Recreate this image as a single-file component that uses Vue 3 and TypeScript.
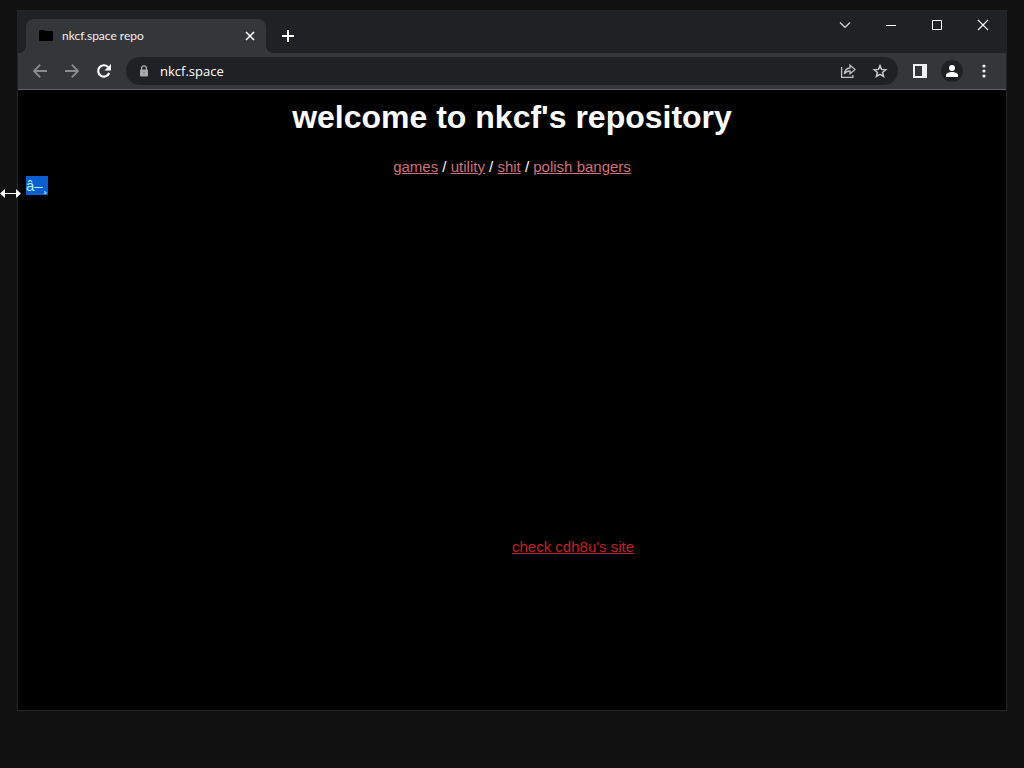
<script setup lang="ts">
import { ref } from 'vue'

interface PageLink {
  label: string
  href: string
}

const address = ref('nkcf.space')
const links: PageLink[] = [
  { label: 'games', href: '#games' },
  { label: 'utility', href: '#utility' },
  { label: 'shit', href: '#shit' },
  { label: 'polish bangers', href: '#bangers' },
]
</script>

<template>
  <div class="desktop">
    <div class="window">
      <header class="tabstrip">
        <div class="tab">
          <svg class="folder" width="14" height="12" viewBox="0 0 14 12" aria-hidden="true">
            <path d="M1 0h4l1.500 1H13a1 1 0 0 1 1 1v8a1 1 0 0 1-1 1H1a1 1 0 0 1-1-1V1a1 1 0 0 1 1-1z" fill="#000" />
          </svg>
          <span class="tab-title">nkcf.space repo</span>
          <button class="tab-close" type="button" aria-label="Close tab">
            <svg width="16" height="16" viewBox="0 0 16 16"><path d="M4 4l8 8M12 4l-8 8" stroke="#fff" stroke-width="1.700" /></svg>
          </button>
        </div>
        <button class="new-tab" type="button" aria-label="New tab">
          <svg width="16" height="16" viewBox="0 0 16 16"><path d="M8 2v12M2 8h12" stroke="#fff" stroke-width="2" /></svg>
        </button>
        <div class="controls">
          <button type="button" aria-label="Search tabs">
            <svg width="12" height="12" viewBox="0 0 12 12"><path d="M1 3.500l5 5 5-5" fill="none" stroke="#ddd" stroke-width="1.200" /></svg>
          </button>
          <button type="button" aria-label="Minimize">
            <svg width="12" height="12" viewBox="0 0 12 12"><path d="M1 6.500h10" stroke="#fff" /></svg>
          </button>
          <button type="button" aria-label="Maximize">
            <svg width="12" height="12" viewBox="0 0 12 12"><path d="M1.500 1.500h9v9h-9z" fill="none" stroke="#fff" /></svg>
          </button>
          <button type="button" aria-label="Close">
            <svg width="12" height="12" viewBox="0 0 12 12"><path d="M1 1l10 10M11 1L1 11" stroke="#fff" stroke-width="1.200" /></svg>
          </button>
        </div>
      </header>

      <nav class="toolbar">
        <button class="tool" type="button" aria-label="Back">
          <svg width="16" height="16" viewBox="0 0 16 16"><path d="M15 8H2M8.200 1.700L2 8l6.200 6.300" fill="none" stroke="#8a8b8e" stroke-width="1.800" /></svg>
        </button>
        <button class="tool" type="button" aria-label="Forward">
          <svg width="16" height="16" viewBox="0 0 16 16"><path d="M1 8h13M7.800 1.700L14 8l-6.200 6.300" fill="none" stroke="#8a8b8e" stroke-width="1.800" /></svg>
        </button>
        <button class="tool" type="button" aria-label="Reload">
          <svg width="16" height="16" viewBox="0 0 16 16">
            <path d="M13.200 10A5.700 5.700 0 1 1 12 4" fill="none" stroke="#fff" stroke-width="2.200" />
            <path d="M15 1v6.500H8.500z" fill="#fff" />
          </svg>
        </button>
        <div class="omnibox">
          <span class="slot">
            <svg width="10" height="12" viewBox="0 0 10 12" aria-hidden="true">
              <path d="M2.600 5V3.200a2.400 2.400 0 0 1 4.800 0V5" fill="none" stroke="#aaabad" stroke-width="1.300" />
              <rect x="1" y="4.500" width="8" height="7" rx="1" fill="#aaabad" />
              <circle cx="5" cy="8" r="1" fill="#8a8b8e" />
            </svg>
          </span>
          <input v-model="address" class="address" type="text" aria-label="Address" spellcheck="false" />
          <button class="tool" type="button" aria-label="Share">
            <svg width="16" height="16" viewBox="0 0 16 16" fill="none" stroke="#bfc0c2" stroke-width="1.300">
              <path d="M1.600 4v10.400h11.300V12" />
              <path d="M4.300 11c.4-4 2.300-5.800 5.700-6V2.200L15 6.500l-5 4.300V8C7.600 8 5.700 8.800 4.300 11z" />
            </svg>
          </button>
          <button class="tool" type="button" aria-label="Bookmark">
            <svg width="16" height="16" viewBox="0 0 16 16">
              <path d="M8 2.600l1.600 3.800 4.100.3-3.100 2.700 1 4L8 11.300l-3.600 2.100 1-4-3.100-2.700 4.100-.3z" fill="none" stroke="#c8c9cb" stroke-width="1.500" />
            </svg>
          </button>
        </div>
        <button class="tool" type="button" aria-label="Side panel">
          <svg width="14" height="14" viewBox="0 0 14 14"><path d="M0 0h14v14H0zM2 2v10h7V2z" fill="#f1f2f5" fill-rule="evenodd" /></svg>
        </button>
        <button class="tool" type="button" aria-label="Profile">
          <svg width="22" height="22" viewBox="0 0 22 22">
            <circle cx="11" cy="11" r="11" fill="#202124" />
            <circle cx="11" cy="8" r="3" fill="#fff" />
            <path d="M5 17v-2c0-2 3.500-3 6-3s6 1 6 3v2z" fill="#fff" />
          </svg>
        </button>
        <button class="tool" type="button" aria-label="Menu">
          <svg width="16" height="16" viewBox="0 0 16 16" fill="#eee"><circle cx="8" cy="3" r="1.600" /><circle cx="8" cy="8" r="1.600" /><circle cx="8" cy="13" r="1.600" /></svg>
        </button>
      </nav>

      <main class="page">
        <h1>welcome to nkcf's repository</h1>
        <p class="links">
          <template v-for="(link, i) in links" :key="link.href">
            <template v-if="i > 0"> / </template><a :href="link.href">{{ link.label }}</a>
          </template>
        </p>
        <p class="marker"><mark>â–¸</mark></p>
        <a class="friend" href="#friend">check cdh8u's site</a>
      </main>
    </div>

    <svg class="cursor" width="21" height="9" viewBox="0 0 21 9" aria-hidden="true">
      <path d="M0 4.500L5 0v4h11V0l5 4.500L16 9V5H5v4z" fill="#fff" />
    </svg>
  </div>
</template>

<style>
body {
  margin: 0;
  background: #111;
}
</style>

<style scoped>
.desktop {
  position: relative;
  display: flex;
  box-sizing: border-box;
  min-height: 100vh;
  padding: 10px 17px 57px;
  background: #111;
}

.window {
  flex: 1;
  display: flex;
  flex-direction: column;
  border: 1px solid #242424;
  background: #000;
  font-family: "Liberation Sans", Arial, sans-serif;
}

button {
  display: flex;
  align-items: center;
  justify-content: center;
  padding: 0;
  border: 0;
  background: none;
}

.tabstrip {
  display: flex;
  height: 42px;
  padding-left: 8px;
  background: #202124;
}

.tab {
  position: relative;
  display: flex;
  align-items: center;
  box-sizing: border-box;
  width: 240px;
  margin-top: 8px;
  padding: 0 8px 0 13px;
  border-radius: 8px 8px 0 0;
  background: #35363a;
}

.tab::before,
.tab::after {
  content: "";
  position: absolute;
  bottom: 0;
  width: 8px;
  height: 8px;
}

.tab::before {
  right: 100%;
  background: radial-gradient(circle at 0 0, transparent 8px, #35363a 8px);
}

.tab::after {
  left: 100%;
  background: radial-gradient(circle at 100% 0, transparent 8px, #35363a 8px);
}

.tab-title {
  flex: 1;
  margin-left: 9px;
  color: #f1f1f2;
  font: 12px/16px Lato, "Noto Sans", sans-serif;
  white-space: nowrap;
}

.new-tab {
  width: 28px;
  margin: 8px 0 0 8px;
}

.controls {
  display: flex;
  height: 28px;
  margin-left: auto;
}

.controls button {
  width: 46px;
}

.toolbar {
  display: flex;
  align-items: center;
  height: 36px;
  padding: 0 6px;
  border-bottom: 1px solid #66676a;
  background: #35363a;
}

.tool {
  flex: none;
  width: 32px;
  height: 28px;
}

.omnibox {
  flex: 1;
  display: flex;
  align-items: center;
  min-width: 0;
  height: 28px;
  margin: 0 6px;
  padding: 0 2px;
  border-radius: 14px;
  background: #202124;
}

.slot {
  display: flex;
  justify-content: center;
  width: 32px;
}

.address {
  flex: 1;
  min-width: 0;
  padding: 0;
  border: 0;
  outline: 0;
  background: none;
  color: #fff;
  font: 13px/20px "Open Sans", "Noto Sans", sans-serif;
}

.page {
  flex: 1;
  padding: 8px;
  color: #fff;
  font-size: 15px;
  line-height: 19px;
}

h1 {
  margin: 0;
  font-size: 32px;
  line-height: 38px;
  text-align: center;
}

.links {
  margin: 21px 0 0;
  text-align: center;
}

.links a {
  color: #d06f78;
}

.marker {
  margin: 0;
}

mark {
  display: inline-block;
  background: #0b5ed0;
  color: #b9f5ff;
}

.friend {
  display: block;
  width: fit-content;
  margin: 342px 0 0 50%;
  color: #c0202a;
}

.cursor {
  position: absolute;
  top: 189px;
  left: 0;
}
</style>
